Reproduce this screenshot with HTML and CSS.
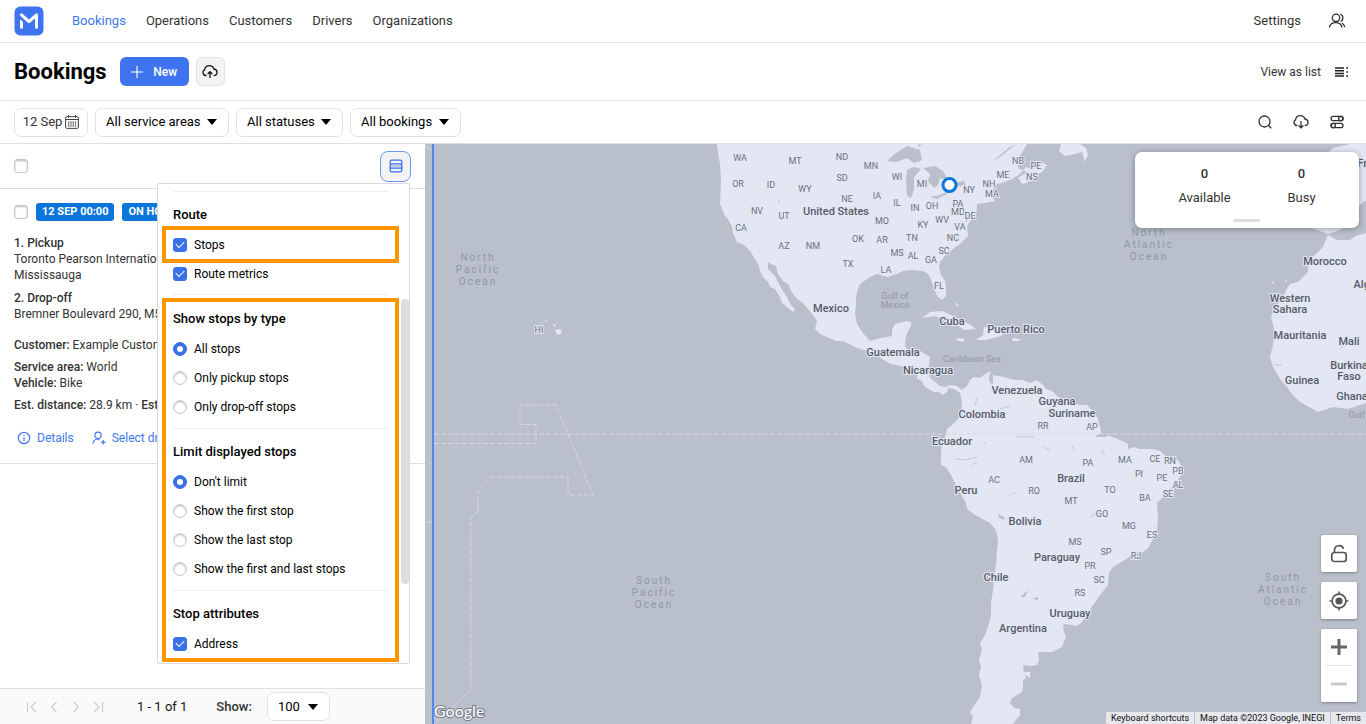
FILE: index.html
```html
<!DOCTYPE html>
<html lang="en">
<head>
<meta charset="utf-8">
<title>Bookings</title>
<link rel="stylesheet" href="styles.css">
</head>
<body>
<div class="app">
  <header class="topbar">
    <a class="logo" href="#" aria-label="Home">
      <svg width="30" height="30" viewBox="0 0 30 30"><rect x=".5" y=".5" width="29" height="29" rx="6" fill="#3f74f0"/><path d="M7.500 21.300v-6.500M7.500 8.900 15 15.600l7.500-6.700v12.400" fill="none" stroke="#fff" stroke-width="3" stroke-linecap="round" stroke-linejoin="round"/><path d="M5.500 11.800 10.500 16.500" stroke="#3f74f0" stroke-width="1.200"/></svg>
    </a>
    <nav class="nav">
      <a class="nav-link active" href="#">Bookings</a>
      <a class="nav-link" href="#">Operations</a>
      <a class="nav-link" href="#">Customers</a>
      <a class="nav-link" href="#">Drivers</a>
      <a class="nav-link" href="#">Organizations</a>
    </nav>
    <div class="account">
      <a class="nav-link" href="#">Settings</a>
      <button class="icon-btn" aria-label="Account">
        <svg width="18" height="16" viewBox="0 0 18 16" class="line"><circle cx="8" cy="4.800" r="3.700"/><path d="M1.300 14.500c.7-3 3-4.800 6.400-4.800s5.600 1.600 6.400 4.800M12.300 1.300c3.300.4 3.400 6.300.3 7M13.800 10.200c1.600.7 2.500 2 3 4"/></svg>
      </button>
    </div>
  </header>

  <div class="titlebar">
    <h1 class="title">Bookings</h1>
    <button class="btn-new"><svg width="12" height="12" viewBox="0 0 12 12"><path d="M6 0v12M0 6h12" stroke="#fff" stroke-width="1.200"/></svg>New</button>
    <button class="btn-upload" aria-label="Upload">
      <svg width="16" height="16" viewBox="0 0 16 16" class="line dark"><path d="M4.500 11.500H4a3 3 0 0 1-1.500-5.600C3 3 5 1.700 7.300 1.700c2.200 0 3.900 1.100 4.600 3.300 2 .2 3.100 1.500 3.100 3.200 0 1.900-1.300 3.300-3.300 3.300M8 14V8M5.600 10 8 7.700l2.400 2.300"/></svg>
    </button>
    <a class="view-list" href="#">View as list
      <svg width="14" height="10" viewBox="0 0 14 10"><path d="M0 1h9M0 3.700h9M0 6.400h9M0 9.100h9" stroke="#222" stroke-width="1.500"/><path d="M11.300 1H13M11.300 5H13M11.300 9H13" stroke="#222" stroke-width="1.500"/></svg>
    </a>
  </div>

  <div class="filters">
    <button class="date-btn">12 Sep
      <svg width="14" height="14" viewBox="0 0 14 14"><rect x=".6" y="1.600" width="12.800" height="11.800" rx="1.500" fill="none" stroke="#444"/><path d="M.6 4.500h12.800M3.500 0v3M10.500 0v3" stroke="#444" fill="none"/><path d="M3 7.200h9M3 9.200h9M3 11.200h9" stroke="#444" stroke-width="1.200" stroke-dasharray="1.300 1"/></svg>
    </button>
    <select class="select" aria-label="Service area"><option>All service areas</option></select>
    <select class="select" aria-label="Status"><option>All statuses</option></select>
    <select class="select" aria-label="Booking type"><option>All bookings</option></select>
    <div class="tools">
      <button class="icon-btn" aria-label="Search"><svg width="16" height="16" viewBox="0 0 16 16" class="line"><circle cx="7.500" cy="7.500" r="5.500"/><path d="m11.500 11.500 2.700 2.700"/></svg></button>
      <button class="icon-btn" aria-label="Download"><svg width="16" height="16" viewBox="0 0 16 16" class="line"><path d="M4.500 11.500H4a3 3 0 0 1-1.500-5.600C3 3 5 1.700 7.300 1.700c2.200 0 3.900 1.100 4.600 3.300 2 .2 3.100 1.500 3.100 3.200 0 1.900-1.300 3.300-3.300 3.300M8 7v6.700M5.600 11.500 8 13.800l2.400-2.300"/></svg></button>
      <button class="icon-btn" aria-label="Preferences"><svg width="16" height="16" viewBox="0 0 16 16" class="line"><rect x="2" y="2.300" width="12" height="4.400" rx="2.200"/><circle cx="11.800" cy="4.500" r="2.200"/><rect x="2" y="9.300" width="12" height="4.400" rx="2.200"/><circle cx="4.200" cy="11.500" r="2.200"/></svg></button>
    </div>
  </div>

  <main class="main">
    <section class="list">
      <div class="list-head">
        <input class="check" type="checkbox" aria-label="Select all bookings">
        <button class="columns-btn" aria-label="Displayed fields" aria-expanded="true"><svg width="14" height="14" viewBox="0 0 14 14"><rect x="1.200" y="1.200" width="11.600" height="11.600" rx="1.500" fill="none" stroke="#3b71e8" stroke-width="1.300"/><path d="M1 4.800h12M1 9.200h12" stroke="#3b71e8" stroke-width="1.300"/><path d="M1 7h12" stroke="#3b71e8" stroke-width=".6"/></svg></button>
      </div>

      <article class="booking">
        <div class="badges">
          <input class="check" type="checkbox" aria-label="Select booking">
          <span class="badge">12 SEP 00:00</span>
          <span class="badge">ON HOLD</span>
        </div>
        <div class="stop"><b>1. Pickup</b><p>Toronto Pearson International</p><p>Mississauga</p></div>
        <div class="stop"><b>2. Drop-off</b><p>Bremner Boulevard 290, M5V</p></div>
        <div class="facts">
          <p class="fact"><b>Customer:</b> Example Customer</p>
          <p class="fact"><b>Service area:</b> World<br><b>Vehicle:</b> Bike</p>
          <p class="fact"><b>Est. distance:</b> 28.9 km · <b>Est. duration:</b></p>
        </div>
        <div class="actions">
          <a class="action" href="#"><svg width="14" height="14" viewBox="0 0 14 14" class="blue"><circle cx="7" cy="7" r="5.700"/><path d="M7 6.300v3.800M7 3.800v1.200"/></svg>Details</a>
          <a class="action" href="#"><svg width="14" height="14" viewBox="0 0 14 14" class="blue"><circle cx="6" cy="4.300" r="3.200"/><path d="M1 12.800C1.300 10 3 8.500 5 8l2.500 1M11.300 9v4.500M9 11.300h4.600"/></svg>Select driver</a>
        </div>
      </article>

      <form class="popover">
        <div class="group">
          <hr class="rule">
          <h2 class="heading">Route</h2>
        </div>
        <div class="highlight highlight-row">
          <label class="row"><input class="check" type="checkbox" checked>Stops</label>
        </div>
        <div class="group">
          <label class="row"><input class="check" type="checkbox" checked>Route metrics</label>
          <hr class="rule after-rows">
        </div>
        <div class="highlight highlight-block">
          <h2 class="heading first">Show stops by type</h2>
          <label class="row"><input class="radio" type="radio" name="type" checked>All stops</label>
          <label class="row"><input class="radio" type="radio" name="type">Only pickup stops</label>
          <label class="row"><input class="radio" type="radio" name="type">Only drop-off stops</label>
          <hr class="rule after-rows">
          <h2 class="heading">Limit displayed stops</h2>
          <label class="row"><input class="radio" type="radio" name="limit" checked>Don't limit</label>
          <label class="row"><input class="radio" type="radio" name="limit">Show the first stop</label>
          <label class="row"><input class="radio" type="radio" name="limit">Show the last stop</label>
          <label class="row"><input class="radio" type="radio" name="limit">Show the first and last stops</label>
          <hr class="rule after-rows">
          <h2 class="heading">Stop attributes</h2>
          <label class="row"><input class="check" type="checkbox" checked>Address</label>
        </div>
        <span class="thumb"></span>
      </form>

      <footer class="pager">
        <div class="pages">
          <button class="page-btn" aria-label="First page" disabled><svg width="12" height="12" viewBox="0 0 12 12"><path d="M1.500 1v10M10 1 5 6l5 5"/></svg></button>
          <button class="page-btn" aria-label="Previous page" disabled><svg width="12" height="12" viewBox="0 0 12 12"><path d="M8.500 1l-5 5 5 5"/></svg></button>
          <button class="page-btn" aria-label="Next page" disabled><svg width="12" height="12" viewBox="0 0 12 12"><path d="m3.500 1 5 5-5 5"/></svg></button>
          <button class="page-btn" aria-label="Last page" disabled><svg width="12" height="12" viewBox="0 0 12 12"><path d="m2 1 5 5-5 5M10.500 1v10"/></svg></button>
        </div>
        <span class="range">1 - 1 of 1</span>
        <label class="show-label" for="size">Show:</label>
        <select class="select page-size" id="size"><option>100</option></select>
      </footer>
    </section>

    <section class="map">
      <svg class="canvas" viewBox="425 144 941 580" preserveAspectRatio="xMidYMid slice" role="img" aria-label="Map of the Americas">
        <g class="land">
          <path d="M717 144 718 153 720 164 721 181 720 204 725 216 728 219 732 227 733 233 737 242 744 245 750 251 755 259 758 264 760 271 763 277 768 282 770 287 775 289 780 297 782 303 788 308 793 312 795 309 791 305 787 297 783 291 780 286 775 276 768 269 768 262 771 264 776 266 778 274 783 281 788 284 791 291 797 299 803 303 808 309 813 315 817 321 815 329 820 334 827 337 836 341 843 341 855 347 867 351 875 353 882 359 891 364 900 366 909 368 917 374 917 379 921 380 925 387 934 392 939 392 943 395 947 392 948 388 954 389 960 393 962 403 962 410 958 419 952 425 947 429 946 435 942 444 941 452 941 465 946 467 952 477 957 487 966 503 967 509 975 515 990 523 996 530 998 541 997 550 996 565 994 577 993 590 991 603 991 615 988 627 984 637 980 643 982 650 979 660 981 667 979 675 982 685 980 697 976 703 973 707 970 713 973 716 971 724H1013L1020 715 1020 709 1014 708 1010 703 1012 698 1022 692 1023 688 1023 680 1026 678 1024 672 1023 665 1031 666 1037 665 1039 660 1038 652 1045 652 1052 652 1062 647 1066 637 1064 632 1063 625 1066 624 1077 626 1082 622 1092 607 1100 595 1108 585 1109 573 1113 567 1128 558 1133 553 1143 552 1148 548 1152 541 1157 530 1158 519 1157 503 1163 497 1172 487 1178 480 1182 473 1182 467 1178 460 1167 457 1160 451 1152 449 1139 449 1134 447 1128 449V444L1120 440 1110 436 1102 437 1100 427 1098 419 1093 411 1087 405 1080 405 1063 400 1057 396 1052 391 1046 389 1043 385 1037 380 1030 383 1023 380 1015 380 1010 379 1004 377 993 375 993 384 990 383 989 377 991 371 985 374 980 378 974 377 970 380 967 386 962 390 957 386 951 385 945 387 940 386 935 382 930 378 928 371 930 357 925 354 920 351 908 351 905 346 905 341 907 333 911 326 911 322 907 321 895 324 892 330 892 336 881 338 870 341 863 333 857 324 855 314 856 305 856 297 858 289 860 284 870 277 877 274 887 277 897 274 903 271 913 270 922 271 927 273 930 277 932 283 935 291 937 296 942 300 946 296 946 288 945 281 941 275 939 267 940 262 945 256 953 249 960 244 968 236 967 227 968 224 973 217 977 209 977 204 985 203 995 201 993 198 990 192 993 189 997 184 1005 182 1012 179 1020 174 1026 167 1033 170 1029 163 1036 167 1043 163 1047 165 1042 172 1034 177 1027 183 1022 184 1018 178 1027 172 1018 168 1017 159 1022 153 1027 144Z"/>
          <path d="M1061 144 1059 151 1065 156 1075 154 1082 152 1085 162 1088 155 1086 148 1080 144ZM922 318 930 312 942 311 951 315 962 320 971 325 976 329 964 330 957 325 945 320 935 316ZM984 327 995 328 1006 333 998 337 986 340 976 340 983 335ZM957 338 965 339 963 342 956 340ZM1013 338 1020 339 1019 341 1012 341ZM955 301 959 306 957 307ZM1024 672 1030 672 1030 678 1025 675ZM555 330 561 329 562 333 558 335 556 333ZM553 324 556 325 554 327ZM545 321 547 320 547 322Z"/>
          <path d="M1366 233 1356 236 1350 240 1337 240 1328 235 1325 242 1323 247 1316 254 1308 262 1308 272 1298 282 1290 284 1286 290 1283 299 1276 306 1271 317 1275 332 1273 345 1270 357 1273 367 1280 379 1287 387 1292 394 1300 402 1318 412 1333 407 1348 409 1366 403ZM1333 148 1350 144H1366V200L1358 207 1350 222 1340 230 1328 234 1312 228 1310 170ZM1271 283 1274 281 1273 284ZM1285 281 1287 280 1286 283Z"/>
        </g>
        <g class="water">
          <path d="M887 161 896 153 907 146 920 150 922 160 914 163 907 158 897 162ZM907 170 914 167 921 169 914 177 914 190 911 198 907 196 906 183ZM923 168 935 166 943 171 948 180 940 178 938 185 934 188 928 181 930 174ZM930 197 940 195 950 190 947 194 937 199ZM950 184 964 181 966 185 955 187ZM994 160 1010 147 1016 144 1005 153 997 159ZM778 199 781 204 778 201ZM918 144 922 145 919 147ZM966 223 965 211 969 217ZM998 514 1005 518 1004 520 999 518ZM1020 597 1028 590 1025 597ZM1033 598 1038 597 1038 601ZM1091 608 1097 600 1095 606ZM1095 437 1108 428 1105 437Z"/>
          <path class="rivers" d="M1015 436 1024 437 1034 437M955 459 965 460 978 457M1044 447 1050 450M1072 446 1075 451M1102 450 1105 457M1009 495 1017 492M1090 517 1096 513M972 465 977 462M975 405 977 398M1000 409 1010 406M983 441 986 444M1340 349 1344 345M1274 365 1282 365"/>
        </g>
        <g class="border">
          <path d="M434 434H1366M434 443.500H536V424.500H520V405H556L593 495H568V477H492L478 491V511L471 518V690L434 724"/>
          <path d="M427 523 432 521M425 145l6 5" stroke-dasharray="none"/>
        </g>
        <g class="state">
          <text x="740" y="161">WA</text><text x="795" y="164">MT</text><text x="842" y="160">ND</text><text x="871" y="169">MN</text><text x="842" y="181">SD</text><text x="738" y="187">OR</text><text x="771" y="188">ID</text><text x="805" y="192">WY</text><text x="897" y="180">WI</text><text x="922" y="187">MI</text><text x="847" y="202">NE</text><text x="877" y="199">IA</text><text x="897" y="206">IL</text><text x="915" y="211">IN</text><text x="932" y="209">OH</text><text x="958" y="207">PA</text><text x="958" y="215">MD</text><text x="970" y="219">DE</text><text x="969" y="193">NY</text><text x="989" y="187">NH</text><text x="992" y="197">MA</text><text x="1003" y="178">ME</text><text x="1018" y="164">NB</text><text x="1036" y="169">PE</text><text x="1032" y="180">NS</text><text x="757" y="214">NV</text><text x="784" y="219">UT</text><text x="741" y="231">CA</text><text x="784" y="249">AZ</text><text x="813" y="249">NM</text><text x="882" y="224">MO</text><text x="858" y="242">OK</text><text x="882" y="243">AR</text><text x="912" y="241">TN</text><text x="923" y="228">KY</text><text x="942" y="223">WV</text><text x="960" y="230">VA</text><text x="953" y="241">NC</text><text x="944" y="254">SC</text><text x="931" y="263">GA</text><text x="913" y="259">AL</text><text x="897" y="256">MS</text><text x="848" y="267">TX</text><text x="886" y="273">LA</text><text x="939" y="289">FL</text><text x="539" y="333">HI</text>
          <text x="1043" y="429">RR</text><text x="1092" y="430">AP</text><text x="1026" y="463">AM</text><text x="1088" y="466">PA</text><text x="1125" y="463">MA</text><text x="1155" y="462">CE</text><text x="1170" y="464">RN</text><text x="1178" y="474">PB</text><text x="1139" y="477">PI</text><text x="1162" y="481">PE</text><text x="1178" y="488">AL</text><text x="1168" y="497">SE</text><text x="994" y="483">AC</text><text x="1034" y="494">RO</text><text x="1071" y="504">MT</text><text x="1110" y="493">TO</text><text x="1145" y="501">BA</text><text x="1102" y="517">GO</text><text x="1129" y="529">MG</text><text x="1152" y="538">ES</text><text x="1075" y="545">MS</text><text x="1106" y="555">SP</text><text x="1136" y="559">RJ</text><text x="1090" y="569">PR</text><text x="1099" y="583">SC</text><text x="1080" y="596">RS</text>
        </g>
        <g class="country">
          <text x="836" y="215">United States</text><text x="831" y="312">Mexico</text><text x="952" y="325">Cuba</text><text x="1016" y="333">Puerto Rico</text><text x="893" y="356">Guatemala</text><text x="928" y="374">Nicaragua</text><text x="1017" y="394">Venezuela</text><text x="1057" y="405">Guyana</text><text x="1072" y="417">Suriname</text><text x="982" y="418">Colombia</text><text x="952" y="445">Ecuador</text><text x="966" y="494">Peru</text><text x="1071" y="482">Brazil</text><text x="1025" y="525">Bolivia</text><text x="1057" y="561">Paraguay</text><text x="996" y="581">Chile</text><text x="1070" y="617">Uruguay</text><text x="1023" y="632">Argentina</text><text x="1325" y="265">Morocco</text><text x="1290" y="302">Western</text><text x="1290" y="313">Sahara</text><text x="1300" y="339">Mauritania</text><text x="1349" y="345">Mali</text><text x="1349" y="369">Burkina</text><text x="1349" y="380">Faso</text><text x="1302" y="384">Guinea</text><text x="1352" y="400">Ghana</text><text x="1371" y="288">Algeria</text><text x="1374" y="167">France</text>
        </g>
        <g class="sea">
          <text x="895" y="299">Gulf of</text><text x="895" y="308">Mexico</text><text x="972" y="362">Caribbean Sea</text><text x="1377" y="418">Gulf of Guinea</text>
        </g>
        <g class="ocean">
          <text x="478" y="261">North</text><text x="478" y="273">Pacific</text><text x="478" y="285">Ocean</text>
          <text x="1149" y="236">North</text><text x="1149" y="248">Atlantic</text><text x="1149" y="260">Ocean</text>
          <text x="654" y="584">South</text><text x="654" y="596">Pacific</text><text x="654" y="608">Ocean</text>
          <text x="1283" y="581">South</text><text x="1283" y="593">Atlantic</text><text x="1283" y="605">Ocean</text>
        </g>
        <circle cx="949.500" cy="185" r="6.500" fill="#fff" stroke="#0a75dd" stroke-width="3"/>
      </svg>

      <div class="status">
        <div class="stat"><b>0</b><span>Available</span></div>
        <div class="stat"><b>0</b><span>Busy</span></div>
        <span class="grip"></span>
      </div>

      <div class="controls">
        <button class="control" aria-label="Lock map"><svg width="18" height="20" viewBox="0 0 18 20"><rect x="1.800" y="8.500" width="14.400" height="9" rx="2.500" fill="none" stroke="#555" stroke-width="1.700"/><path d="M4.500 8.500V6c0-5.500 8-5.500 8.800-1.200" fill="none" stroke="#555" stroke-width="1.700"/></svg></button>
        <button class="control" aria-label="Locate"><svg width="20" height="20" viewBox="0 0 20 20"><circle cx="10" cy="10" r="6.900" fill="none" stroke="#555" stroke-width="1.600"/><circle cx="10" cy="10" r="3.600" fill="#555"/><path d="M10 .6v3M10 16.400v3M.6 10h3M16.400 10h3" stroke="#555" stroke-width="1.600"/></svg></button>
        <div class="zoom">
          <button class="control" aria-label="Zoom in"><svg width="16" height="16" viewBox="0 0 16 16"><path d="M8 0v16M0 8h16" stroke="#666" stroke-width="3"/></svg></button>
          <button class="control" aria-label="Zoom out"><svg width="16" height="16" viewBox="0 0 16 16"><path d="M0 8h16" stroke="#ccc" stroke-width="3"/></svg></button>
        </div>
      </div>

      <svg class="google" width="54" height="22" viewBox="0 0 54 22"><text x="2" y="16">Google</text></svg>
      <div class="credits">
        <button class="credit">Keyboard shortcuts</button>
        <span class="credit">Map data ©2023 Google, INEGI</span>
        <a class="credit" href="#">Terms</a>
      </div>
    </section>
  </main>
</div>
</body>
</html>
```

FILE: styles.css
```css
* { box-sizing: border-box; }
body { margin: 0; font: 12px/16px Roboto, "Liberation Sans", sans-serif; color: #333; background: #fff; }
button, input, select { font: inherit; color: inherit; margin: 0; }
button { padding: 0; border: 0; background: none; }
a { color: inherit; text-decoration: none; }
p, h1, h2, hr { margin: 0; }
svg { display: block; flex: none; }
b { font-weight: 500; }

.app { display: flex; flex-direction: column; height: 100vh; min-width: 900px; overflow: hidden; }
.line { fill: none; stroke: #333; stroke-width: 1.3; }
.line.dark { stroke: #111; }
.icon-btn { display: flex; }

.topbar { display: flex; align-items: center; height: 43px; padding: 0 20px 0 14px; border-bottom: 1px solid #e2e2e2; font-size: 13px; }
.nav { display: flex; gap: 20px; margin-left: 28px; }
.nav-link { color: #333; }
.nav-link.active { color: #4278ee; }
.account { display: flex; align-items: center; gap: 27px; margin-left: auto; }

.titlebar { display: flex; align-items: center; height: 58px; padding: 0 17px 0 14px; border-bottom: 1px solid #e2e2e2; }
.title { font-size: 22px; line-height: 28px; font-weight: 700; color: #000; }
.btn-new { display: flex; align-items: center; justify-content: center; gap: 10px; width: 69px; height: 29px; margin-left: 13px; border-radius: 6px; background: #3f74f0; color: #fff; font-weight: 500; }
.btn-upload { display: flex; align-items: center; justify-content: center; width: 29px; height: 29px; margin-left: 7px; border: 1px solid #e4e4e4; border-radius: 6px; background: #f3f3f3; }
.view-list { display: flex; align-items: center; gap: 14px; margin-left: auto; }

.filters { display: flex; align-items: center; gap: 7px; height: 43px; padding: 0 21px 0 14px; border-bottom: 1px solid #dedede; font-size: 13px; }
.date-btn { display: flex; align-items: center; justify-content: center; gap: 3px; width: 74px; height: 29px; border: 1px solid #e2e2e2; border-radius: 7px; }
.select { appearance: none; height: 29px; padding: 0 27px 0 10px; border: 1px solid #e2e2e2; border-radius: 7px; color: #000; font-size: 13px; background: #fff url("data:image/svg+xml,%3Csvg xmlns='http://www.w3.org/2000/svg' width='10' height='6'%3E%3Cpath d='M0 0h10L5 6z'/%3E%3C/svg%3E") no-repeat right 11px center; }
.tools { display: flex; gap: 20px; margin-left: auto; }

.main { display: flex; flex: 1; min-height: 0; }
.list { position: relative; display: flex; flex-direction: column; flex: none; width: 425px; background: #fff; }
.list-head { display: flex; align-items: center; justify-content: space-between; height: 45px; padding: 0 14px; border-bottom: 1px solid #dedede; }
.columns-btn { display: flex; align-items: center; justify-content: center; width: 31px; height: 31px; border: 1px solid #6c97f3; border-radius: 8px; background: #f3f3f3; }

.check, .radio { appearance: none; display: grid; place-items: center; flex: none; width: 14px; height: 14px; border: 1px solid #c8c8c8; border-radius: 3px; background: #fff; box-shadow: inset 0 1px 2px #bbb; }
.radio { border-radius: 50%; }
.check:checked, .radio:checked { border-color: #3b71e8; background: #3b71e8; box-shadow: none; }
.check:checked::after { content: ""; width: 7px; height: 4px; margin-bottom: 2px; border: solid #fff; border-width: 0 0 1px 1px; transform: rotate(-45deg); }
.radio:checked::after { content: ""; width: 6px; height: 6px; border-radius: 50%; background: #fff; }

.booking { padding: 14px 14px 17px; border-bottom: 1px solid #dedede; white-space: nowrap; }
.badges { display: flex; align-items: center; gap: 8px; margin-bottom: 14px; }
.badge { padding: 0 6px; border-radius: 3px; background: #0a76dc; color: #fff; font-size: 11px; line-height: 18px; font-weight: 700; }
.stop { margin-bottom: 7px; }
.facts { display: grid; gap: 6px; margin-top: 15px; }
.actions { display: flex; gap: 18px; margin-top: 17px; padding-left: 3px; }
.action { display: flex; align-items: center; gap: 6px; color: #4278ee; }
.blue { fill: none; stroke: #4278ee; stroke-width: 1.2; }

.popover { position: absolute; top: 39px; left: 157px; width: 253px; padding: 7px 10px 1px 4px; border: 1px solid #dadada; border-radius: 2px; background: #fff; color: #000; }
.group { padding: 0 11px; }
.rule { border: 0; border-top: 1px solid #eee; }
.rule.after-rows { margin-top: 6px; }
.highlight .rule.after-rows { margin-top: 7px; }
.heading { margin: 13px 0 5px; font-size: 13px; line-height: 20px; font-weight: 500; }
.heading.first { margin-top: 7px; }
.row { display: flex; align-items: center; gap: 7px; height: 29px; }
.highlight { border: 4px solid #ff9500; padding: 0 7px; width: 237px; }
.highlight-row { margin: -4px 0; }
.highlight-block { display: flow-root; margin-top: 3px; }
.thumb { position: absolute; top: 115px; right: 0; width: 8px; height: 285px; border-radius: 4px; background: #dedede; }

.pager { display: flex; align-items: center; height: 36px; margin-top: auto; padding-left: 26px; border-top: 1px solid #e2e2e2; background: #fafafa; font-size: 13px; }
.pages { display: flex; gap: 10px; }
.page-btn svg { fill: none; stroke: #ccc; stroke-width: 1.2; }
.range { margin-left: 33px; color: #111; }
.show-label { margin: 0 15px 0 29px; font-weight: 500; }
.page-size { padding-right: 29px; }

.map { position: relative; flex: 1; min-width: 0; overflow: hidden; background: #b9bfcb; }
.map::before { content: ""; position: absolute; z-index: 1; top: 0; bottom: 0; left: 7px; width: 2px; background: #5385ee; }
.canvas { width: 100%; height: 100%; font-family: Roboto, sans-serif; }
.canvas text { text-anchor: middle; }
.land { fill: #e3e7f4; }
.water { fill: #b9bfcb; }
.rivers { fill: none; stroke: #c3c9d5; }
.border { fill: none; stroke: #d5d9e2; stroke-dasharray: 5 2; }
.state { font-size: 9px; fill: #6b707c; stroke: #e3e7f4; stroke-width: 2px; paint-order: stroke; }
.country { font-size: 11px; font-weight: 500; fill: #555b68; stroke: #e3e7f4; stroke-width: 2px; paint-order: stroke; }
.sea { font-size: 9px; fill: #9298a5; }
.ocean { font-size: 10px; letter-spacing: 2px; fill: #9197a3; }

.status { position: absolute; top: 8px; right: 7px; display: grid; grid-template-columns: 1fr 1fr; width: 224px; height: 76px; padding: 14px 9px 0 21px; border-radius: 7px; background: #fff; box-shadow: 0 1px 6px #0005; font-size: 13px; }
.stat { display: flex; flex-direction: column; align-items: center; gap: 8px; }
.grip { position: absolute; bottom: 6px; left: 50%; width: 27px; height: 3px; margin-left: -14px; border-radius: 2px; background: #ddd; }

.controls { position: absolute; right: 9px; bottom: 22px; display: grid; gap: 10px; width: 36px; }
.control { display: flex; align-items: center; justify-content: center; width: 36px; height: 37px; border-radius: 2px; background: #fff; box-shadow: 0 1px 3px #0005; }
.zoom { border-radius: 2px; background: #fff; box-shadow: 0 1px 3px #0005; }
.zoom .control { height: 36px; box-shadow: none; }
.zoom .control + .control { position: relative; height: 37px; }
.zoom .control + .control::before { content: ""; position: absolute; top: 0; left: 5px; right: 5px; height: 1px; background: #e4e4e4; }

.google { position: absolute; left: 7px; bottom: 1px; font: 500 16px Lato, sans-serif; fill: #fff; stroke: #747a86; stroke-width: 2px; paint-order: stroke; }
.credits { position: absolute; right: 0; bottom: 0; display: flex; gap: 1px; font-size: 9px; line-height: 12px; color: #111; }
.credit { padding: 0 5px; background: #e6e8ec; line-height: 12px; }
```
